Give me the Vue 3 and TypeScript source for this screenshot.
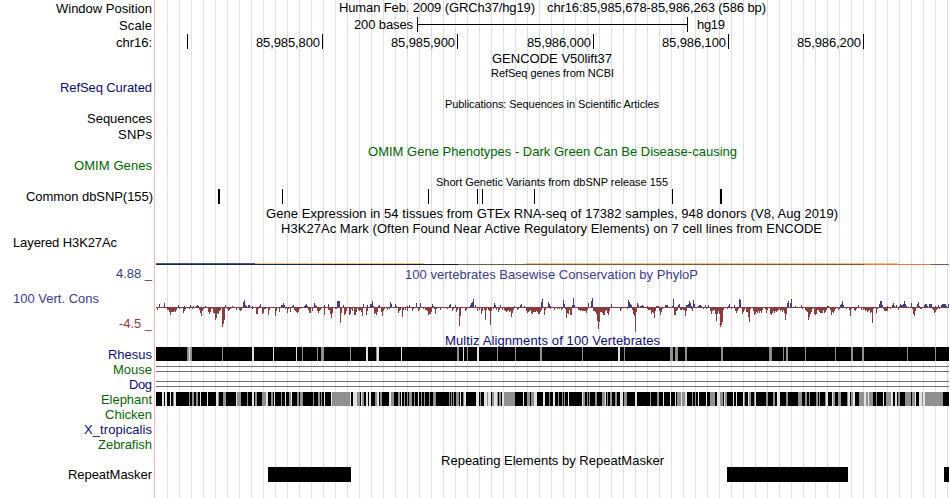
<script setup lang="ts">
interface Label {
  text: string
  x: number
  y: number
  w: number
  color?: string
  small?: boolean
}

interface Box {
  x: number
  y: number
  w: number
  h: number
  color: string
}

interface Track {
  id: string
  top: number
  height: number
  labels: Label[]
  boxes?: Box[]
}

const BLACK = '#000000'
const NAVY = '#0c0c78'
const GREEN = '#006400'
const SPECIES_GREEN = '#0a640a'
const BLUE = '#3c3c8c'
const RED = '#8c3c3c'
const GRAY = '#909090'
const LIGHT = '#e2e2e2'

const box = (x: number, y: number, w: number, h: number, color = BLACK): Box => ({ x, y, w, h, color })

// Each segment holds "offset:score" pairs, offsets in thirds of a pixel from the segment start
const conservation = [
  {
    start: 150,
    up: '28:3 43:4 85:2 103:1 121:2 130:1 139:1 142:2 145:1 167:1 226:2 247:1 280:5 283:7 286:2 289:1 295:2 298:2 307:1 328:1 331:3 394:2 397:2 400:4 403:2 427:1 430:2 463:1 466:2 469:3 472:1 493:4 496:2 499:1 523:2 535:3 562:6 565:6 568:6 580:2 640:3 652:2 661:3 664:3 667:6 670:1 685:1 688:2 721:5 724:3 736:3 739:1 772:1 778:2 799:4',
    down: '22:3 52:3 55:3 58:5 61:8 64:5 67:5 70:5 73:4 76:5 79:3 88:2 100:6 103:4 106:2 118:2 127:2 148:3 151:6 154:9 157:4 160:2 175:5 178:7 181:5 184:2 190:6 193:6 196:13 199:11 202:6 205:7 208:4 211:3 217:20 220:17 223:13 232:2 235:4 238:3 241:2 259:3 268:3 271:4 274:3 307:2 319:7 322:7 325:2 337:7 340:6 343:2 346:2 355:8 358:3 376:9 379:4 388:5 406:2 412:6 415:2 421:5 433:3 436:4 439:5 442:6 445:5 448:2 475:3 478:6 481:6 487:4 502:4 505:6 508:4 511:3 523:8 535:3 538:3 541:7 544:11 547:6 556:2 559:2 571:16 574:6 583:8 586:7 589:4 598:8 601:7 604:2 607:4 613:8 616:8 619:5 625:3 628:4 631:3 634:5 637:9 649:8 652:4 673:7 676:6 679:8 682:5 694:5 697:9 700:4 703:2 712:3 718:2 745:6 748:4 751:3 757:10 760:3 766:3 772:4 787:4 790:2 805:4 808:3'
  },
  {
    start: 420,
    up: '1:4 37:3 40:1 88:2 91:3 106:2 151:2 154:4 157:5 160:8 166:2 223:4 226:2 241:2 283:1 301:2 304:3 313:1 364:5 367:8 385:5 388:3 391:1 430:7 433:3 457:2 460:9 463:2 505:4 514:6 517:9 574:3 625:7 628:5 631:3 634:2 652:4 655:2 661:1 664:1 667:2 670:1 682:1 709:1 712:1 715:1 736:2 739:2 742:2 757:1 760:8 775:2 778:3 799:2 802:2 805:3 808:6',
    down: '10:2 16:3 19:3 22:4 25:8 28:7 31:7 34:5 43:2 46:7 49:2 61:3 82:2 97:4 100:2 109:5 112:3 118:19 121:9 136:4 139:3 172:4 178:3 184:7 187:4 193:3 196:13 199:3 205:3 208:4 211:18 214:4 220:2 229:3 235:5 238:3 247:3 253:3 256:4 259:5 262:4 265:3 268:5 271:4 274:10 277:6 280:3 292:3 295:2 319:4 322:6 325:5 328:4 331:3 334:6 337:7 340:5 343:5 346:5 349:4 352:5 355:7 358:7 361:5 364:3 373:8 376:3 391:2 403:3 412:2 418:2 424:3 427:2 436:2 439:11 442:6 445:7 448:3 451:8 454:8 475:3 478:3 481:4 484:3 487:4 490:4 493:4 496:4 499:6 502:3 520:4 523:4 526:5 529:7 532:14 535:22 538:15 541:5 544:5 547:6 550:8 553:8 556:4 559:3 562:6 565:8 568:4 601:4 604:2 622:2 637:3 640:7 643:9 646:25 649:5 682:2 685:3 688:3 691:3 694:7 697:5 700:6 703:11 706:4 718:4 721:8 724:5 727:2 763:8 766:8 769:4 772:3 784:3 787:2 790:3 796:9 799:4'
  },
  {
    start: 680,
    up: '22:2 25:2 28:6 31:4 34:1 40:7 43:3 55:1 58:2 61:2 64:1 76:2 85:2 145:1 148:3 163:2 178:8 181:7 322:4 325:6 331:4 334:8 346:1 364:2 442:1 445:1 481:2 484:3 487:6 490:2 535:2 598:3 601:6 604:6 607:2 622:1 637:2 640:4 643:1 649:2 658:1 661:3 664:2 667:2 670:3 673:6 676:3 679:1 694:4 712:3 715:5 718:1 733:2 736:3 739:3 742:1 748:3 751:3 754:3 766:1 775:2 784:2 787:3 790:3 793:3 796:3 799:1 805:3',
    down: '1:3 4:3 13:3 16:8 19:2 34:2 37:4 70:2 79:2 91:4 94:7 97:4 100:3 103:3 106:7 109:14 112:7 115:4 118:7 121:20 124:18 127:15 130:3 142:2 154:2 166:4 169:6 172:4 175:2 187:7 190:5 193:3 199:5 202:5 205:10 208:15 211:2 220:4 223:8 226:7 229:5 232:6 235:4 238:6 241:4 244:6 247:3 256:2 259:6 262:3 271:7 274:8 277:6 280:4 283:6 286:4 289:5 292:4 295:3 298:2 301:4 304:3 307:5 310:3 313:6 316:13 319:7 340:1 367:2 376:3 379:4 382:5 385:13 388:10 391:7 394:5 397:2 403:7 406:8 409:7 412:3 415:3 418:5 421:6 424:6 427:6 430:3 433:6 436:5 439:3 451:3 454:8 457:5 460:6 463:4 466:2 475:3 478:2 499:2 508:3 511:9 514:2 523:3 526:4 529:2 544:3 550:3 553:2 556:4 559:3 562:5 565:4 568:3 571:6 574:5 577:16 580:2 589:6 592:2 610:2 613:4 616:4 619:4 622:4 631:2 655:3 697:2 700:7 703:9 706:4 721:2 724:2 757:2 760:3 763:6 766:5 769:3 772:2 778:2'
  }
]

const AXIS = 307

const parseBars = (start: number, data: string, up: boolean): Box[] =>
  data.split(' ').map((pair) => {
    const [offset, score] = pair.split(':').map(Number)
    const x = start + Math.floor(offset / 3)
    return up ? box(x, AXIS - score, 1, score, BLUE) : box(x, AXIS, 1, score, RED)
  })

const phyloP: Box[] = [
  box(156, AXIS, 793, 1, RED),
  ...conservation.flatMap((s) => [...parseBars(s.start, s.up, true), ...parseBars(s.start, s.down, false)]),
  box(635, 331, 1, 1, '#ff00ff')
]

// Alignment gaps: g = partial identity, l = low identity
const rhesus = [
  { start: 150, gaps: 'g111-117 l117-120 g120-126 g216-219 l306-312 l369-372 l438-441 g456-459 g501-504 g513-522 g600-603 l648-654 g678-681 l681-687 l753-756' },
  { start: 420, gaps: 'g111-117 l129-132 g141-144 l171-177 g231-234 g285-288 g360-366 g486-489 l594-600 g612-615 g750-759 g765-774 g795-801' },
  { start: 680, gaps: 'g123-129 g267-276 g309-312 g318-324 g375-378 g465-468 g513-519 g546-552 g681-684 g765-768' }
]

const elephant = [
  { start: 150, gaps: 'l36-42 l45-51 l60-63 g69-72 l72-78 g117-120 g126-132 g138-144 l150-153 l171-174 l198-204 g204-207 g219-228 l258-261 g261-273 g291-294 l306-312 g315-321 g336-348 l348-354 g363-369 l372-375 g393-396 l405-408 g417-423 l423-426 g441-447 g450-459 g489-492 g504-510 g513-516 l522-525 l543-546 g546-600 l600-603 l609-621 g621-630 l633-636 g636-642 l648-654 l657-663 g675-681 l681-687 g690-696 l717-723 g723-732 g744-750 l753-756 g762-765 g771-774 g777-786 g792-795 l804-807' },
  { start: 420, gaps: 'g3-6 g12-15 g27-30 g39-48 g87-90 g93-96 g99-102 g108-117 l120-123 g129-132 l132-138 l168-177 g180-183 l192-201 g201-204 l204-213 g216-222 l222-231 g231-234 g237-243 l246-252 g252-258 g258-279 g279-285 l309-312 g321-330 g333-342 l342-351 l369-375 g387-390 l399-405 g414-417 g426-429 g432-435 l444-447 l486-489 g489-495 g501-504 g507-510 g525-531 g546-555 l555-558 g561-564 g570-576 g585-591 l600-609 g612-621 l645-651 g690-693 g711-717 l729-732 l750-753 l765-768 g771-783 l783-786 g792-795 l798-801' },
  { start: 680, gaps: 'g6-12 l15-21 g36-39 g45-48 l54-57 l78-81 g90-105 l111-120 g120-129 l132-135 g135-141 l159-162 l168-171 l189-192 g192-195 l204-207 g207-213 g222-225 l225-228 g258-264 g279-285 l291-300 g318-324 g354-366 g375-381 g387-390 g408-414 g417-420 g435-438 l438-444 l456-459 g459-465 g474-483 g501-504 l504-510 g513-519 l519-525 g537-552 l552-558 g558-564 l564-567 g567-579 g588-591 l609-612 g618-633 l633-639 l645-651 g654-660 g675-693 g696-705 l705-708 l717-726 g726-729 l729-735 g735-789' }
]

const alignment = (y: number, parts: typeof rhesus): Box[] => [
  box(156, y, 793, 14),
  ...parts.flatMap(({ start, gaps }) =>
    gaps.split(' ').map((gap) => {
      const [from, to] = gap.slice(1).split('-').map((v) => Number(v) / 3)
      return box(start + from, y, to - from, 14, gap[0] === 'g' ? GRAY : LIGHT)
    })
  )
]

const unaligned = (y: number): Box[] => [box(156, y, 793, 1, '#707070'), box(156, y + 5, 793, 1, '#707070')]

const rulerTicks = [187, 322, 457, 593, 728, 863]
const rulerLabels = ['85,985,800', '85,985,900', '85,986,000', '85,986,100', '85,986,200']

const tracks: Track[] = [
  {
    id: 'position', top: 0, height: 16,
    labels: [
      { text: 'Window Position', x: 56, y: 13, w: 96 },
      { text: 'Human Feb. 2009 (GRCh37/hg19)', x: 339, y: 12, w: 196 },
      { text: 'chr16:85,985,678-85,986,263 (586 bp)', x: 547, y: 12, w: 219 }
    ]
  },
  {
    id: 'scale', top: 16, height: 17,
    labels: [
      { text: 'Scale', x: 119, y: 30, w: 33 },
      { text: '200 bases', x: 354, y: 29, w: 59 },
      { text: 'hg19', x: 697, y: 29, w: 28 }
    ],
    boxes: [box(417, 17, 1, 15), box(417, 24, 271, 1), box(687, 17, 1, 15)]
  },
  {
    id: 'ruler', top: 33, height: 17,
    labels: [
      { text: 'chr16:', x: 116, y: 47, w: 36 },
      ...rulerLabels.map((text, i) => ({ text, x: rulerTicks[i + 1] - 66, y: 47, w: 64 }))
    ],
    boxes: rulerTicks.map((x) => box(x, 34, 1, 15))
  },
  { id: 'gencode', top: 50, height: 16, labels: [{ text: 'GENCODE V50lift37', x: 492, y: 63, w: 120 }] },
  {
    id: 'refseq', top: 66, height: 30,
    labels: [
      { text: 'RefSeq genes from NCBI', x: 491, y: 77, w: 123, small: true },
      { text: 'RefSeq Curated', x: 60, y: 92, w: 92, color: NAVY }
    ]
  },
  {
    id: 'publications', top: 96, height: 47,
    labels: [
      { text: 'Publications: Sequences in Scientific Articles', x: 445, y: 108, w: 214, small: true },
      { text: 'Sequences', x: 87, y: 123, w: 65 },
      { text: 'SNPs', x: 118, y: 139, w: 34 }
    ]
  },
  {
    id: 'omim', top: 143, height: 32,
    labels: [
      { text: 'OMIM Gene Phenotypes - Dark Green Can Be Disease-causing', x: 368, y: 156, w: 369, color: GREEN },
      { text: 'OMIM Genes', x: 74, y: 170, w: 78, color: GREEN }
    ]
  },
  {
    id: 'dbsnp', top: 175, height: 31,
    labels: [
      { text: 'Short Genetic Variants from dbSNP release 155', x: 436, y: 186, w: 232, small: true },
      { text: 'Common dbSNP(155)', x: 26, y: 201, w: 127 }
    ],
    boxes: [
      box(218, 189, 2, 15),
      ...[282, 428, 477, 482, 534, 672].map((x) => box(x, 189, 1, 15)),
      box(720, 189, 2, 15)
    ]
  },
  {
    id: 'gtex', top: 206, height: 15,
    labels: [{ text: 'Gene Expression in 54 tissues from GTEx RNA-seq of 17382 samples, 948 donors (V8, Aug 2019)', x: 266, y: 218, w: 572 }]
  },
  {
    id: 'h3k27ac', top: 221, height: 45,
    labels: [
      { text: 'H3K27Ac Mark (Often Found Near Active Regulatory Elements) on 7 cell lines from ENCODE', x: 281, y: 233, w: 541 },
      { text: 'Layered H3K27Ac', x: 13, y: 247, w: 104 }
    ],
    boxes: [
      box(156, 263, 99, 1, '#3a6470'),
      box(255, 263, 169, 1, '#f4c474'),
      box(525, 263, 373, 1, '#f4c474'),
      box(156, 264, 166, 1, '#1c2456'),
      box(322, 264, 136, 1, '#21192a'),
      box(458, 264, 406, 1, '#7c583e'),
      box(864, 264, 67, 1, '#f0744c'),
      box(931, 264, 18, 1, '#7c5850')
    ]
  },
  {
    id: 'phylop', top: 266, height: 67,
    labels: [
      { text: '4.88 _', x: 116, y: 278, w: 36, color: BLUE },
      { text: '100 vertebrates Basewise Conservation by PhyloP', x: 405, y: 279, w: 293, color: BLUE },
      { text: '100 Vert. Cons', x: 13, y: 303, w: 86, color: BLUE },
      { text: '-4.5 _', x: 119, y: 328, w: 33, color: RED }
    ],
    boxes: phyloP
  },
  {
    id: 'multiz', top: 333, height: 14,
    labels: [{ text: 'Multiz Alignments of 100 Vertebrates', x: 445, y: 345, w: 215, color: NAVY }]
  },
  { id: 'rhesus', top: 347, height: 15, labels: [{ text: 'Rhesus', x: 108, y: 359, w: 44, color: NAVY }], boxes: alignment(347, rhesus) },
  { id: 'mouse', top: 362, height: 15, labels: [{ text: 'Mouse', x: 113, y: 374, w: 39, color: SPECIES_GREEN }], boxes: unaligned(366) },
  { id: 'dog', top: 377, height: 15, labels: [{ text: 'Dog', x: 129, y: 389, w: 23, color: NAVY }], boxes: unaligned(381) },
  { id: 'elephant', top: 392, height: 15, labels: [{ text: 'Elephant', x: 101, y: 404, w: 51, color: SPECIES_GREEN }], boxes: alignment(392, elephant) },
  { id: 'chicken', top: 407, height: 15, labels: [{ text: 'Chicken', x: 105, y: 419, w: 47, color: SPECIES_GREEN }] },
  { id: 'tropicalis', top: 422, height: 15, labels: [{ text: 'X_tropicalis', x: 84, y: 434, w: 68, color: NAVY }] },
  { id: 'zebrafish', top: 437, height: 15, labels: [{ text: 'Zebrafish', x: 98, y: 449, w: 54, color: SPECIES_GREEN }] },
  {
    id: 'repeats', top: 452, height: 46,
    labels: [
      { text: 'Repeating Elements by RepeatMasker', x: 441, y: 465, w: 223 },
      { text: 'RepeatMasker', x: 68, y: 479, w: 84 }
    ],
    boxes: [box(268, 467, 83, 15), box(727, 467, 121, 15), box(944, 467, 5, 15)]
  }
]
</script>

<template>
  <main class="browser">
    <svg
      v-for="track in tracks"
      :key="track.id"
      class="track"
      width="950"
      :height="track.height"
      :viewBox="`0 ${track.top} 950 ${track.height}`"
    >
      <rect
        v-for="(b, i) in track.boxes"
        :key="i"
        :x="b.x"
        :y="b.y"
        :width="b.w"
        :height="b.h"
        :fill="b.color"
      />
      <text
        v-for="label in track.labels"
        :key="label.text"
        :class="['label', { small: label.small }]"
        :x="label.x"
        :y="label.y"
        :textLength="label.w"
        :fill="label.color || '#000000'"
      >{{ label.text }}</text>
    </svg>
  </main>
</template>

<style>
body {
  margin: 0;
  background: #ffffff;
}
</style>

<style scoped>
.browser {
  display: flex;
  flex-direction: column;
  width: 950px;
  height: 498px;
  overflow: hidden;
  background-color: #ffffff;
  background-image:
    linear-gradient(#ffb4b4, #ffb4b4),
    repeating-linear-gradient(to right, #dcdcf8 0, #dcdcf8 1px, transparent 1px, transparent 12px);
  background-size: 1px 100%, 783px 100%;
  background-position: 154px 0, 167px 0;
  background-repeat: no-repeat;
}

.track {
  display: block;
  flex: none;
  overflow: visible;
  shape-rendering: crispEdges;
}

.label {
  font-family: "Liberation Sans", Arial, Helvetica, sans-serif;
  font-size: 13px;
}

.label.small {
  font-size: 11px;
}
</style>
